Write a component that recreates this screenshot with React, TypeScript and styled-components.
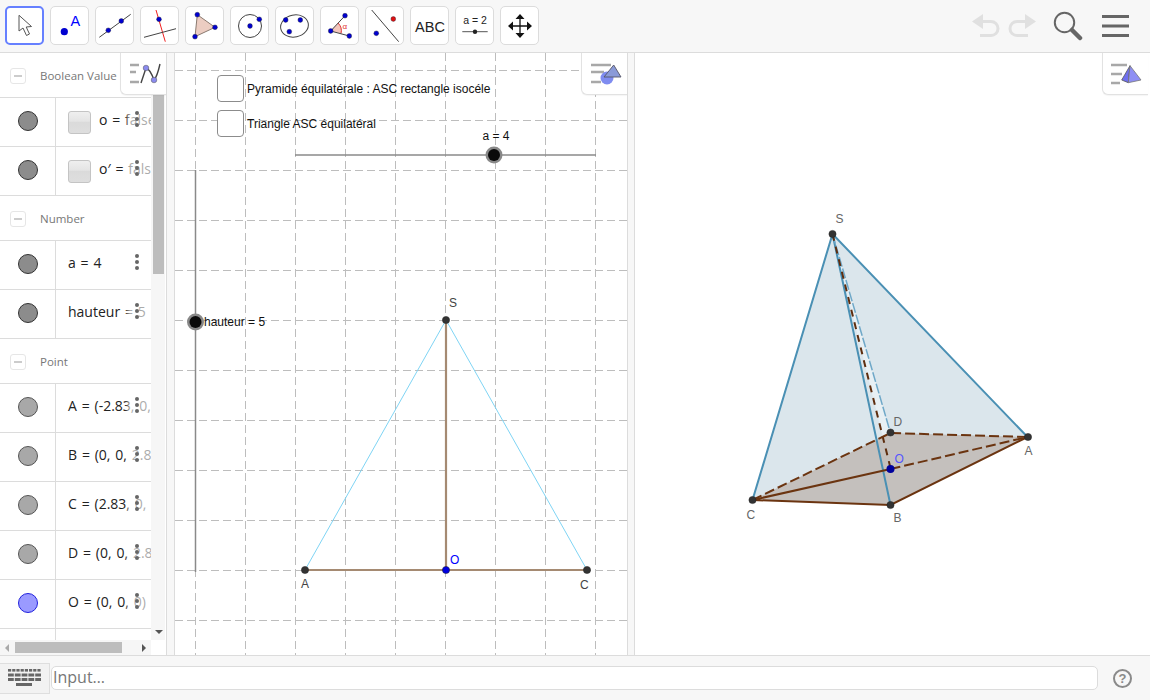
import React from 'react';
import styled, { createGlobalStyle } from 'styled-components';

const GlobalStyle = createGlobalStyle`
    html, body {
        margin: 0;
        padding: 0;
        background: #fff;
        font-family: "Open Sans", "Liberation Sans", sans-serif;
    }
`;

const Page = styled.div`
    width: 1150px;
    height: 700px;
    display: flex;
    flex-direction: column;
    overflow: hidden;
`;

const Toolbar = styled.div`
    height: 46px;
    flex: none;
    display: flex;
    align-items: flex-start;
    justify-content: space-between;
    padding: 6px 20px 0 5px;
    box-sizing: content-box;
    background: #f7f7f7;
    border-bottom: 1px solid #dcdcdc;
`;

const ToolGroup = styled.div`
    display: flex;
    gap: 6px;
`;

const ToolButton = styled.div<{ $active?: boolean }>`
    width: 39px;
    height: 39px;
    background: #fff;
    border-radius: 5px;
    box-sizing: border-box;
    border: ${p => (p.$active ? '2px solid #6680ff' : '1px solid #dcdcdc')};
    display: flex;
    align-items: center;
    justify-content: center;
    flex: none;
`;

const ToolIcon = styled.svg`
    width: 38px;
    height: 38px;
    flex: none;
    margin: -2px;
    overflow: visible;
`;

const HistoryGroup = styled.div`
    display: flex;
    align-items: center;
    height: 38px;
    margin-top: 1px;
`;

const HistorySpacer = styled.div<{ $width: number }>`
    width: ${p => p.$width}px;
    flex: none;
`;

const Main = styled.div`
    flex: 1;
    display: flex;
    min-height: 0;
`;

const AlgebraPanel = styled.div`
    width: 166px;
    flex: none;
    display: flex;
    flex-direction: column;
    position: relative;
    border-right: 1px solid #dcdcdc;
    box-sizing: content-box;
`;

const AlgebraBody = styled.div`
    flex: 1;
    display: flex;
    min-height: 0;
`;

const AlgebraList = styled.div`
    width: 151px;
    flex: none;
    overflow: hidden;
    position: relative;
`;

const SectionHeader = styled.div`
    height: 43px;
    padding-top: 1px;
    display: flex;
    align-items: center;
    gap: 14px;
    padding-left: 10px;
    border-bottom: 1px solid #dcdcdc;
    font-size: 11.5px;
    color: #777;
`;

const Collapse = styled.div`
    width: 14px;
    height: 14px;
    border: 1px solid #e6e6e6;
    border-radius: 3px;
    display: flex;
    align-items: center;
    justify-content: center;

    &::before {
        content: '';
        width: 8px;
        height: 2px;
        background: #ccc;
    }
`;

const Row = styled.div`
    height: 48px;
    display: grid;
    grid-template-columns: 56px 1fr;
    border-bottom: 1px solid #dcdcdc;
    position: relative;
`;

const MarbleCell = styled.div`
    display: flex;
    align-items: center;
    justify-content: center;
    padding-bottom: 3px;
    border-right: 1px solid #dcdcdc;
`;

const Marble = styled.div<{ $fill: string; $edge: string }>`
    width: 20px;
    height: 20px;
    border-radius: 50%;
    box-sizing: border-box;
    background: ${p => p.$fill};
    border: 1px solid ${p => p.$edge};
`;

const RowContent = styled.div`
    display: flex;
    align-items: center;
    gap: 8px;
    padding: 0 0 5px 12px;
    font-size: 14px;
    word-spacing: 1.2px;
    color: #222;
    white-space: nowrap;
    overflow: hidden;
`;

const BoolBox = styled.div`
    width: 23px;
    height: 23px;
    flex: none;
    margin-top: 5px;
    box-sizing: border-box;
    border: 1px solid #c4c4c4;
    border-radius: 3px;
    background: linear-gradient(#efefef, #e4e4e4 45%, #dadada 46%, #dedede);
`;

const Fade = styled.div`
    position: absolute;
    top: 0;
    bottom: 0;
    left: 125px;
    width: 26px;
    background: linear-gradient(90deg, rgba(255, 255, 255, 0), rgba(255, 255, 255, 0.62) 5px);
`;

const Kebab = styled.div`
    position: absolute;
    left: 135px;
    top: 13px;
    display: flex;
    flex-direction: column;
    gap: 2px;

    span {
        width: 4px;
        height: 4px;
        border-radius: 50%;
        background: #666;
    }
`;

const VScroll = styled.div`
    width: 14px;
    flex: none;
    background: #f6f6f6;
    position: relative;
`;

const VThumb = styled.div`
    position: absolute;
    top: 0;
    left: 2px;
    width: 11px;
    height: 221px;
    background: #bdbdbd;
`;

const ScrollArrow = styled.div<{ $dir: 'left' | 'right' | 'down' }>`
    position: absolute;
    width: 0;
    height: 0;
    ${p => p.$dir === 'down' && 'right: 2px; bottom: 6px; border: 4px solid transparent; border-top: 4px solid #555; border-bottom: 0;'}
    ${p => p.$dir === 'left' && 'left: 5px; top: 4px; border: 4px solid transparent; border-right: 4px solid #aaa; border-left: 0;'}
    ${p => p.$dir === 'right' && 'left: 142px; top: 4px; border: 4px solid transparent; border-left: 4px solid #555; border-right: 0;'}
`;

const HScroll = styled.div`
    height: 15px;
    flex: none;
    width: 151px;
    background: #f6f6f6;
    position: relative;
`;

const HThumb = styled.div`
    position: absolute;
    left: 15px;
    top: 2px;
    width: 107px;
    height: 11px;
    background: #bdbdbd;
`;

const StyleButton = styled.div<{ $left: number }>`
    position: absolute;
    top: 0;
    left: ${p => p.$left}px;
    width: 46px;
    height: 42px;
    background: #fff;
    border: 1px solid #e2e2e2;
    border-top: 0;
    border-right: 0;
    border-bottom-left-radius: 6px;
    box-sizing: border-box;
    box-shadow: 0 1px 1px rgba(0, 0, 0, 0.04);
    z-index: 3;
`;

const Divider = styled.div<{ $width: number }>`
    width: ${p => p.$width}px;
    flex: none;
    background: #f7f7f7;
`;

const GraphicsPanel = styled.div`
    width: 454px;
    flex: none;
    position: relative;
    overflow: hidden;
    border-left: 1px solid #dcdcdc;
    border-right: 1px solid #dcdcdc;
    box-sizing: border-box;
`;

const Panel3D = styled.div`
    flex: 1;
    position: relative;
    overflow: hidden;
    border-left: 1px solid #dcdcdc;
`;

const Canvas = styled.svg`
    display: block;
    width: 100%;
    height: 100%;
`;

const CheckList = styled.div`
    position: absolute;
    left: 42px;
    top: 22px;
    display: flex;
    flex-direction: column;
    gap: 8px;
`;

const CheckRow = styled.div`
    display: flex;
    align-items: center;
    gap: 3px;
    font-family: "Liberation Sans", sans-serif;
    font-size: 12px;
    color: #111;
`;

const CheckBox = styled.div`
    width: 27px;
    height: 27px;
    box-sizing: border-box;
    border: 1px solid #8c8c8c;
    border-radius: 4px;
    background: #fff;
`;

const BottomBar = styled.div`
    height: 44px;
    flex: none;
    display: flex;
    align-items: center;
    gap: 1px;
    background: #f7f7f7;
    border-top: 1px solid #dcdcdc;
`;

const KeyboardButton = styled.div`
    width: 50px;
    height: 31px;
    flex: none;
    box-sizing: border-box;
    background: #f2f2f2;
    border: 1px solid #dedede;
    border-left: 0;
    display: flex;
    align-items: center;
    justify-content: center;
`;

const InputField = styled.div`
    width: 1047px;
    height: 24px;
    flex: none;
    box-sizing: border-box;
    background: #fff;
    border: 1px solid #dcdcdc;
    border-radius: 5px;
    padding-left: 1px;
    font-size: 16px;
    line-height: 21px;
    color: #777;
`;

const HelpButton = styled.div`
    width: 19px;
    height: 19px;
    margin-left: 14px;
    box-sizing: border-box;
    border: 2px solid #8a8a8a;
    border-radius: 50%;
    font-family: "Liberation Sans", sans-serif;
    font-weight: 700;
    font-size: 13px;
    line-height: 15px;
    text-align: center;
    color: #8a8a8a;
`;

const BLUE = '#0000d0';

const Dot = ({ x, y, c = BLUE, r = 2.4 }: { x: number; y: number; c?: string; r?: number }) => (
    <circle cx={x} cy={y} r={r} fill={c} stroke="#223" strokeWidth={0.4} />
);

const toolIcons: React.ReactNode[] = [
    <path key="a" d="M13 8.3 L13 24 L17 21 L20.5 28.5 L23.5 27 L20.2 20 L25.5 19.5 Z" fill="#fff" stroke="#555" strokeWidth={1} />,
    <g key="b">
        <circle cx={13.3} cy={24.7} r={3.6} fill={BLUE} />
        <text x={19.5} y={18.5} fontSize={14.5} fill="#0000ff" fontFamily="Liberation Sans">A</text>
    </g>,
    <g key="c">
        <line x1={3.3} y1={30.3} x2={34.7} y2={7.3} stroke="#444" />
        <Dot x={12.3} y={23.3} />
        <Dot x={25.3} y={14} />
    </g>,
    <g key="d">
        <line x1={15} y1={3} x2={24.3} y2={34.7} stroke="#f02020" />
        <line x1={3} y1={30.3} x2={35} y2={21.7} stroke="#444" />
        <Dot x={18} y={12.3} />
    </g>,
    <g key="e">
        <polygon points="11.3,7.7 29,20.3 9,29.7" fill="#eccdc2" stroke="#8a7a70" />
        <Dot x={11.3} y={7.7} />
        <Dot x={29} y={20.3} />
        <Dot x={9} y={29.7} />
    </g>,
    <g key="f">
        <circle cx={19} cy={19} r={11.5} fill="none" stroke="#444" />
        <Dot x={19} y={19} />
        <Dot x={28.3} y={12.3} />
    </g>,
    <g key="g">
        <ellipse cx={18.5} cy={19} rx={14} ry={11} transform="rotate(-12 18.5 19)" fill="none" stroke="#444" />
        <Dot x={9.7} y={13} />
        <Dot x={13.3} y={24.7} />
        <Dot x={24.3} y={13} />
    </g>,
    <g key="h">
        <path d="M9.7 24 L17 16 A11 11 0 0 1 20 26.5 Z" fill="#f4c6bc" />
        <path d="M17 16 A11 11 0 0 1 20 26.5" fill="none" stroke="#e03030" />
        <polyline points="24,8.7 9.7,24 28.3,29" fill="none" stroke="#444" />
        <text x={21.5} y={22} fontSize={8} fill="#e03030" fontFamily="Liberation Sans">α</text>
        <Dot x={24} y={8.7} />
        <Dot x={9.7} y={24} />
        <Dot x={28.3} y={29} />
    </g>,
    <g key="i">
        <line x1={5.7} y1={3} x2={32.7} y2={34.7} stroke="#444" />
        <Dot x={27.3} y={12} c="#e01010" />
        <Dot x={10.3} y={26.3} />
    </g>,
    <text key="j" x={19} y={24.5} fontSize={14.5} fill="#222" textAnchor="middle" fontFamily="Liberation Sans">ABC</text>,
    <g key="k">
        <text x={19} y={17} fontSize={10.5} fill="#222" textAnchor="middle" fontFamily="Liberation Sans">a = 2</text>
        <line x1={6.3} y1={24.7} x2={31.7} y2={24.7} stroke="#555" />
        <circle cx={19} cy={24.7} r={2.2} fill="#222" />
    </g>,
    <g key="l" fill="#111">
        <path d="M10 19 H28 M19 10 V28" stroke="#111" strokeWidth={1.3} />
        <path d="M19 7 L23.5 12 H14.5 Z M19 31 L23.5 26 H14.5 Z M7 19 L12 14.5 V23.5 Z M31 19 L26 14.5 V23.5 Z" />
    </g>,
];

const UndoIcon = ({ flip }: { flip?: boolean }) => (
    <svg width="28" height="24" viewBox="0 0 28 24" style={flip ? { transform: 'scaleX(-1)' } : undefined}>
        <path d="M0 7.5 L11 0 V15 Z" fill="#e0e0e0" />
        <path d="M8 7.5 H19 A7 7 0 0 1 19 21.5 H8" fill="none" stroke="#e0e0e0" strokeWidth={3} />
    </svg>
);

const SearchIcon = () => (
    <svg width="30" height="30" viewBox="0 0 30 30">
        <circle cx={11.5} cy={11.5} r={9.7} fill="none" stroke="#666" strokeWidth={2} />
        <line x1={19} y1={19} x2={27} y2={27} stroke="#666" strokeWidth={4.5} strokeLinecap="round" />
    </svg>
);

const MenuIcon = () => (
    <svg width="28" height="24" viewBox="0 0 28 24">
        <path d="M0 2.5 H27 M0 12 H27 M0 21.5 H27" stroke="#666" strokeWidth={3} />
    </svg>
);

const AlgebraStyleIcon = () => (
    <svg width="46" height="42" viewBox="0 0 46 42">
        <path d="M9 12 H18 M9 19 H15 M9 29 H18" stroke="#a8a8a8" strokeWidth={2.4} />
        <path d="M20 30 L25 15 Q29 16 33 27 Q36 24 39 11" fill="none" stroke="#444" strokeWidth={1.4} />
        <circle cx={25} cy={15} r={2.8} fill="#8a8aee" stroke="#555" strokeWidth={0.5} />
        <circle cx={33} cy={27} r={2.8} fill="#8a8aee" stroke="#555" strokeWidth={0.5} />
    </svg>
);

const GraphicsStyleIcon = () => (
    <svg width="46" height="42" viewBox="0 0 46 42">
        <path d="M9 12 H29 M9 19 H22 M9 29 H19" stroke="#a8a8a8" strokeWidth={2.4} />
        <circle cx={25} cy={25} r={6.5} fill="#7f8cf0" />
        <polygon points="31.7,12 39,24 22,24" fill="#8a9ad8" stroke="#556" strokeWidth={0.9} />
    </svg>
);

const Style3DIcon = () => (
    <svg width="46" height="42" viewBox="0 0 46 42">
        <path d="M8 12 H24 M8 21 H19 M8 30 H17" stroke="#a8a8a8" strokeWidth={2.4} />
        <polygon points="27,12.7 18.7,27 25.3,29.7" fill="#6f6fee" stroke="#555" strokeWidth={0.8} />
        <polygon points="27,12.7 38,27 25.3,29.7" fill="#8f8ff4" stroke="#777" strokeWidth={0.8} />
    </svg>
);

const KeyboardIcon = () => (
    <svg width="33" height="20" viewBox="0 0 33 20">
        {[0, 1, 2, 3, 4, 5, 6, 7].map(i => (
            <rect key={i} x={i * 4.2} y={1} width={3.2} height={2.6} fill="#666" />
        ))}
        {[0, 1, 2, 3, 4].map(i => (
            <rect key={i} x={i * 6.8} y={5.5} width={5.8} height={3} fill="#666" />
        ))}
        {[0, 1, 2, 3, 4].map(i => (
            <rect key={i} x={i * 6.8} y={10} width={5.8} height={3} fill="#666" />
        ))}
        <rect x={8} y={15} width={16} height={3} fill="#666" />
    </svg>
);

const gridX = [196, 246, 296, 346, 396, 446, 496, 546, 596];
const gridY = [70, 120, 170, 220, 270, 320, 370, 420, 470, 520, 570, 620];

const GeoPoint = ({ x, y, c = '#333' }: { x: number; y: number; c?: string }) => (
    <circle cx={x} cy={y} r={3.6} fill={c} stroke="#222" strokeWidth={0.5} />
);

const Label = ({ x, y, c = '#444', children }: { x: number; y: number; c?: string; children: React.ReactNode }) => (
    <text x={x} y={y} fontSize={12} fill={c} fontFamily="Liberation Sans">{children}</text>
);

const GraphicsCanvas = () => (
    <Canvas viewBox="175 53 452 602">
        {gridX.map(x => (
            <line key={x} x1={x - 0.5} y1={53} x2={x - 0.5} y2={655} stroke="#bdbdbd" strokeDasharray="8 4" />
        ))}
        {gridY.map(y => (
            <line key={y} x1={175} y1={y + 0.5} x2={627} y2={y + 0.5} stroke="#bdbdbd" strokeDasharray="8 4" />
        ))}
        <line x1={295} y1={155} x2={596} y2={155} stroke="#8a8a8a" strokeWidth={1.5} />
        <circle cx={494} cy={155} r={8.5} fill="#888" />
        <circle cx={494} cy={155} r={6} fill="#0a0a0a" />
        <text x={496} y={140} fontSize={12} fill="#111" textAnchor="middle" fontFamily="Liberation Sans">a = 4</text>

        <line x1={195.5} y1={170} x2={195.5} y2={572} stroke="#8a8a8a" strokeWidth={1.5} />
        <circle cx={195.5} cy={322} r={8.5} fill="#888" />
        <circle cx={195.5} cy={322} r={6} fill="#0a0a0a" />
        <text x={204} y={326} fontSize={12} fill="#111" fontFamily="Liberation Sans">hauteur = 5</text>

        <line x1={305} y1={570} x2={446} y2={320} stroke="#7fd4f4" />
        <line x1={587} y1={570} x2={446} y2={320} stroke="#7fd4f4" />
        <line x1={305} y1={570} x2={587} y2={570} stroke="#a58a72" strokeWidth={2.2} />
        <line x1={446} y1={320} x2={446} y2={570} stroke="#a58a72" strokeWidth={2.2} />
        <GeoPoint x={305} y={570} />
        <GeoPoint x={587} y={570} />
        <GeoPoint x={446} y={320} />
        <GeoPoint x={446} y={570} c="#0000e0" />
        <Label x={449} y={307}>S</Label>
        <Label x={301} y={588}>A</Label>
        <Label x={580} y={589}>C</Label>
        <Label x={450} y={564} c="#0000ff">O</Label>
    </Canvas>
);

const Canvas3D = () => (
    <Canvas viewBox="636 53 514 602">
        <polygon points="833,234 753,500 891,505" fill="#dbe6ec" />
        <polygon points="833,234 1028,437 891,505" fill="#dbe6ec" />
        <polygon points="833,234 891,433 891,468" fill="#e8f0f4" />
        <polygon points="753,500 891,433 1028,437 891,505" fill="#c4c0bd" />
        <path d="M833 234 L753 500 M833 234 L1028 437 M833 234 L891 505" fill="none" stroke="#4a90b4" strokeWidth={2} />
        <line x1={833} y1={234} x2={891} y2={433} stroke="#6fa8c8" strokeWidth={1.5} strokeDasharray="10 2" />
        <line x1={833} y1={234} x2={891} y2={468} stroke="#5e2d0e" strokeWidth={2} strokeDasharray="7 6" />
        <path d="M753 500 L891 505 L1028 437 M753 500 L891 469" fill="none" stroke="#6b3410" strokeWidth={2} />
        <path d="M753 500 L891 433 L1028 437 M891 469 L1028 437" fill="none" stroke="#6b3410" strokeWidth={2} strokeDasharray="10 4" />
        <GeoPoint x={833} y={234} />
        <GeoPoint x={1028.5} y={437} />
        <GeoPoint x={891} y={505} />
        <GeoPoint x={753} y={500} />
        <GeoPoint x={891} y={432.5} />
        <circle cx={891} cy={469} r={4} fill="#00009c" />
        <Label x={836} y={223} c="#666">S</Label>
        <Label x={1025} y={455} c="#666">A</Label>
        <Label x={894} y={522} c="#666">B</Label>
        <Label x={747} y={519} c="#666">C</Label>
        <Label x={894} y={426} c="#666">D</Label>
        <Label x={895} y={463} c="#5555ff">O</Label>
    </Canvas>
);

type Item = { text: string; fill: string; edge: string; box?: boolean };

const boolItems: Item[] = [
    { text: 'o = false', fill: '#8c8c8c', edge: '#333', box: true },
    { text: 'o′ = false', fill: '#8c8c8c', edge: '#333', box: true },
];
const numberItems: Item[] = [
    { text: 'a = 4', fill: '#8c8c8c', edge: '#333' },
    { text: 'hauteur = 5', fill: '#8c8c8c', edge: '#333' },
];
const pointItems: Item[] = [
    { text: 'A = (-2.83, 0, 0)', fill: '#a8a8a8', edge: '#555' },
    { text: 'B = (0, 0, 2.83)', fill: '#a8a8a8', edge: '#555' },
    { text: 'C = (2.83, 0, 0)', fill: '#a8a8a8', edge: '#555' },
    { text: 'D = (0, 0, 2.83)', fill: '#a8a8a8', edge: '#555' },
    { text: 'O = (0, 0, 0)', fill: '#9a9aff', edge: '#2222dd' },
];

const AlgebraRow = ({ item }: { item: Item }) => (
    <Row>
        <MarbleCell>
            <Marble $fill={item.fill} $edge={item.edge} />
        </MarbleCell>
        <RowContent>
            {item.box && <BoolBox />}
            <span>{item.text}</span>
        </RowContent>
        <Fade />
        <Kebab>
            <span />
            <span />
            <span />
        </Kebab>
    </Row>
);

const Section = ({ title, items }: { title: string; items: Item[] }) => (
    <>
        <SectionHeader>
            <Collapse />
            {title}
        </SectionHeader>
        {items.map(item => (
            <AlgebraRow key={item.text} item={item} />
        ))}
    </>
);

export default function App() {
    return (
        <Page>
            <GlobalStyle />
            <Toolbar>
                <ToolGroup>
                    {toolIcons.map((icon, i) => (
                        <ToolButton key={i} $active={i === 0}>
                            <ToolIcon viewBox="0 0 38 38">{icon}</ToolIcon>
                        </ToolButton>
                    ))}
                </ToolGroup>
                <HistoryGroup>
                    <UndoIcon />
                    <HistorySpacer $width={8} />
                    <UndoIcon flip />
                    <HistorySpacer $width={17} />
                    <SearchIcon />
                    <HistorySpacer $width={19} />
                    <MenuIcon />
                </HistoryGroup>
            </Toolbar>
            <Main>
                <AlgebraPanel>
                    <AlgebraBody>
                        <AlgebraList>
                            <Section title="Boolean Value" items={boolItems} />
                            <Section title="Number" items={numberItems} />
                            <Section title="Point" items={pointItems} />
                            <Row>
                                <MarbleCell />
                            </Row>
                        </AlgebraList>
                        <VScroll>
                            <VThumb />
                            <ScrollArrow $dir="down" />
                        </VScroll>
                    </AlgebraBody>
                    <HScroll>
                        <ScrollArrow $dir="left" />
                        <HThumb />
                        <ScrollArrow $dir="right" />
                    </HScroll>
                    <StyleButton $left={120}>
                        <AlgebraStyleIcon />
                    </StyleButton>
                </AlgebraPanel>
                <Divider $width={7} />
                <GraphicsPanel>
                    <GraphicsCanvas />
                    <CheckList>
                        <CheckRow>
                            <CheckBox />
                            Pyramide équilatérale : ASC rectangle isocéle
                        </CheckRow>
                        <CheckRow>
                            <CheckBox />
                            Triangle ASC équilatéral
                        </CheckRow>
                    </CheckList>
                    <StyleButton $left={406}>
                        <GraphicsStyleIcon />
                    </StyleButton>
                </GraphicsPanel>
                <Divider $width={6} />
                <Panel3D>
                    <Canvas3D />
                    <StyleButton $left={467}>
                        <Style3DIcon />
                    </StyleButton>
                </Panel3D>
            </Main>
            <BottomBar>
                <KeyboardButton>
                    <KeyboardIcon />
                </KeyboardButton>
                <InputField>Input…</InputField>
                <HelpButton>?</HelpButton>
            </BottomBar>
        </Page>
    );
}
